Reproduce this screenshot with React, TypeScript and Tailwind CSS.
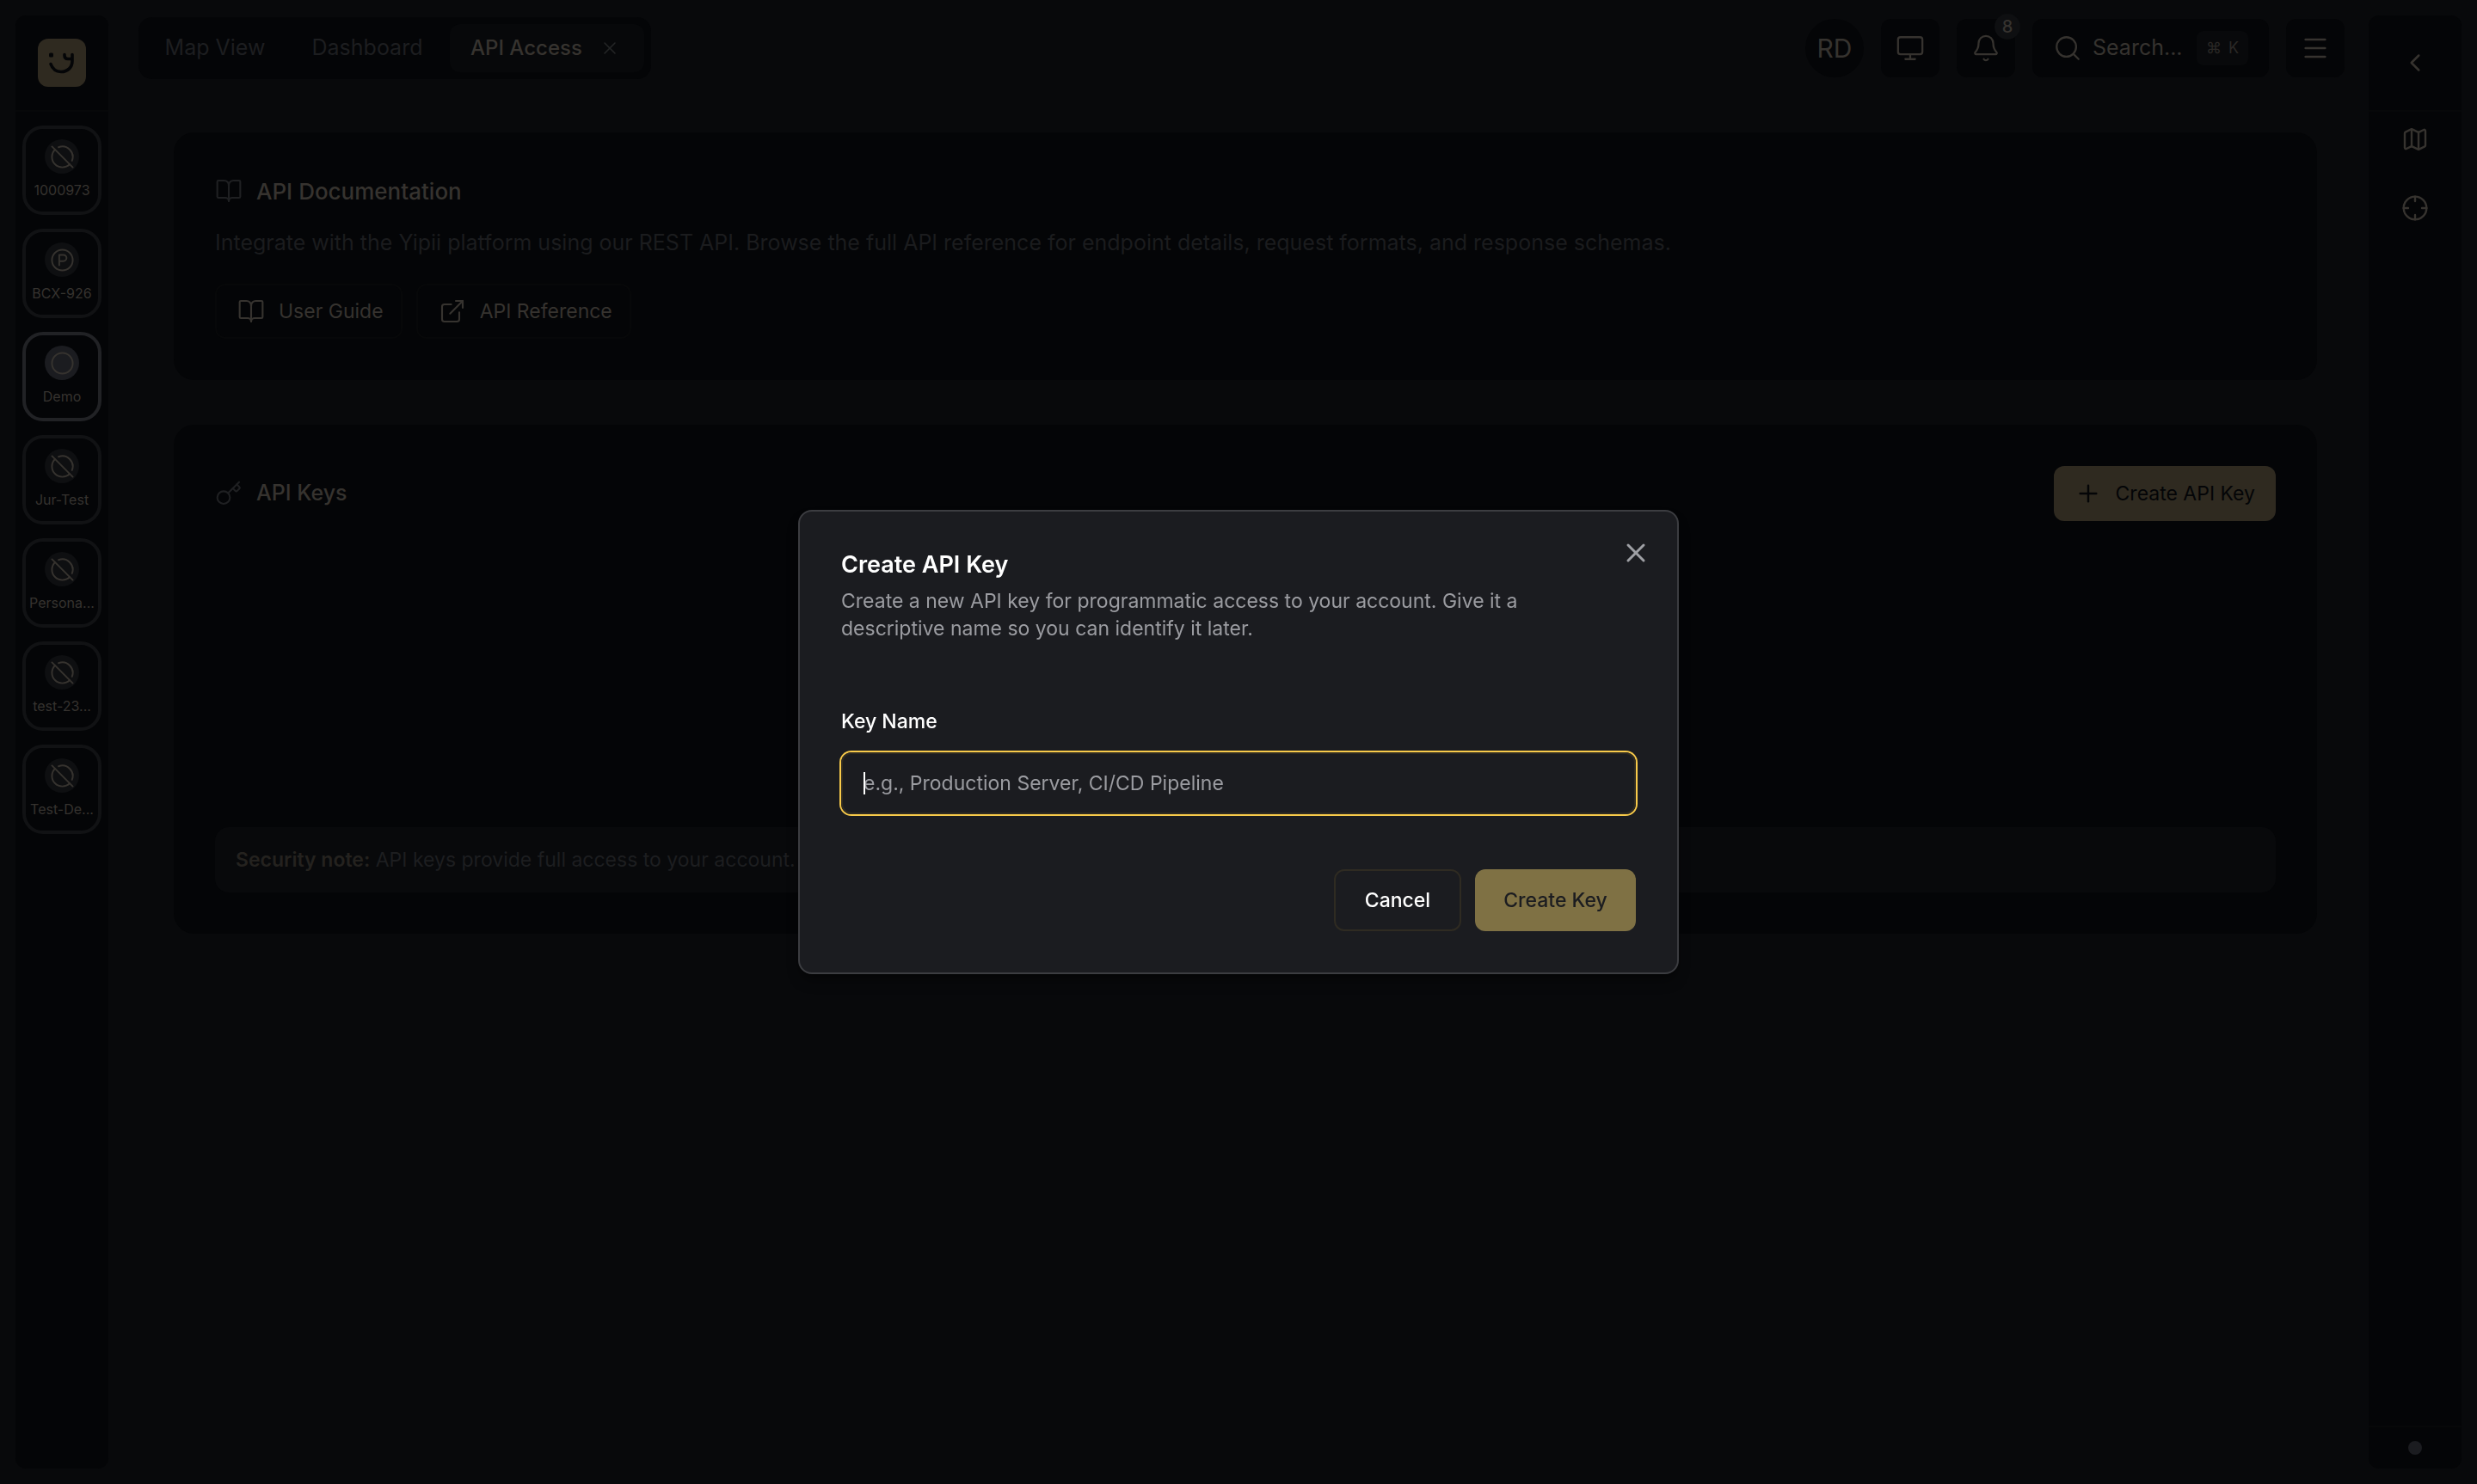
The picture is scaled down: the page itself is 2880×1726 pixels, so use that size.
import type { ReactNode } from "react";
import {
  Bell,
  BookOpen,
  ChevronLeft,
  Circle,
  CircleOff,
  CircleParking,
  Crosshair,
  ExternalLink,
  Key,
  Map as MapIcon,
  Menu,
  Monitor,
  Plus,
  Search,
  X,
} from "lucide-react";

type Tenant = { name: string; kind: "off" | "parked" | "active" };

const tenants: Tenant[] = [
  { name: "1000973", kind: "off" },
  { name: "BCX-926", kind: "parked" },
  { name: "Demo", kind: "active" },
  { name: "Jur-Test", kind: "off" },
  { name: "Persona...", kind: "off" },
  { name: "test-23...", kind: "off" },
  { name: "Test-De...", kind: "off" },
];

function Logo() {
  return (
    <svg viewBox="0 0 56 56" className="size-14" role="img" aria-label="Yipii">
      <rect width="56" height="56" rx="12" fill="#2f2a20" />
      <rect x="13" y="16.500" width="5" height="5" rx="1.5" fill="#040507" />
      <path d="M15 29.500C17 35 21 38.500 27 38.500C35 38.500 40 33 40 26V18.500" fill="none" stroke="#040507" strokeWidth="3.600" strokeLinecap="round" />
      <path d="M31 18.500V19.500C31 22 32.500 23.500 35 23.500H39" fill="none" stroke="#040507" strokeWidth="3.600" strokeLinecap="round" />
    </svg>
  );
}

function TenantTile({ name, kind }: Tenant) {
  const active = kind === "active";
  const Icon = active ? Circle : kind === "parked" ? CircleParking : CircleOff;
  return (
    <button
      type="button"
      aria-pressed={active}
      className={
        active
          ? "flex h-[104px] w-[92px] flex-col items-center rounded-3xl border-4 border-[#212225] pt-3"
          : "flex h-[104px] w-[92px] flex-col items-center rounded-3xl border-4 border-[#111214] pt-3"
      }
    >
      <span
        className={
          active
            ? "flex size-10 items-center justify-center rounded-full bg-[#1b1c20]"
            : "flex size-10 items-center justify-center rounded-full bg-[#0e0f11]"
        }
      >
        <Icon size={29} strokeWidth={1.6} />
      </span>
      <span className="mt-[7px] text-base leading-6">{name}</span>
    </button>
  );
}

function SquareButton({ label, children }: { label: string; children: ReactNode }) {
  return (
    <button type="button" aria-label={label} className="relative flex size-[68px] items-center justify-center rounded-xl bg-[#040507]">
      {children}
    </button>
  );
}

function TopBar() {
  return (
    <header className="mr-7 ml-[35px] flex items-center justify-between">
      <nav className="flex h-[72px] items-center gap-1.5 rounded-2xl bg-[#040507] p-2 text-[25px] text-[#1d1e20]">
        <a href="#map" className="min-w-[162px] text-center">Map View</a>
        <a href="#dashboard" className="min-w-[180px] text-center">Dashboard</a>
        <div className="flex h-14 items-center gap-5 rounded-xl bg-[#07080a] pr-7 pl-6">
          <a href="#api" aria-current="page" className="text-2xl font-medium text-[#36332f]">API Access</a>
          <button type="button" aria-label="Close tab">
            <X size={24} strokeWidth={1.6} className="text-[#242526]" />
          </button>
        </div>
      </nav>
      <div className="flex items-center gap-5">
        <button type="button" className="size-[68px] rounded-full bg-[#040507] text-3xl">RD</button>
        <SquareButton label="Displays">
          <Monitor size={34} strokeWidth={1.6} />
        </SquareButton>
        <SquareButton label="Notifications">
          <Bell size={34} strokeWidth={1.6} />
          <span className="absolute -top-1.5 -right-1.5 flex size-[30px] items-center justify-center rounded-full bg-[#0e0f11] text-xl font-medium">8</span>
        </SquareButton>
        <button type="button" className="flex h-[68px] min-w-[275px] items-center justify-between rounded-xl bg-[#040507] px-6 text-[25px]">
          <span className="flex items-center gap-3">
            <Search size={34} strokeWidth={1.6} />
            Search...
          </span>
          <kbd className="flex h-10 w-[60px] items-center justify-center gap-2 rounded-lg bg-[#08090b] font-[Inter,'DejaVu_Sans',sans-serif] text-lg text-[#2a2826]">
            <span>⌘</span>
            <span>K</span>
          </kbd>
        </button>
        <SquareButton label="Menu">
          <Menu size={34} strokeWidth={1.8} />
        </SquareButton>
      </div>
    </header>
  );
}

function OutlineLink({ icon, href, children }: { icon: ReactNode; href: string; children: ReactNode }) {
  return (
    <a href={href} className="flex h-16 items-center gap-4 rounded-xl border-2 border-[#070809] pr-5 pl-6 text-[23px]">
      {icon}
      {children}
    </a>
  );
}

function ApiPage() {
  return (
    <main className="mt-[62px] mr-[60px] ml-[76px] flex flex-col gap-[52px]">
      <section className="rounded-3xl bg-[#040507] p-12">
        <h2 className="flex h-10 items-center gap-4 text-[26px] font-medium">
          <BookOpen size={32} strokeWidth={1.6} className="text-[#1f2022]" />
          API Documentation
        </h2>
        <p className="mt-5 mb-7 text-[25px] leading-10 text-[#1b1c1e]">
          Integrate with the Yipii platform using our REST API. Browse the full API reference for endpoint details, request formats, and response schemas.
        </p>
        <div className="flex gap-4">
          <OutlineLink href="#guide" icon={<BookOpen size={32} strokeWidth={1.6} />}>User Guide</OutlineLink>
          <OutlineLink href="#reference" icon={<ExternalLink size={32} strokeWidth={1.6} />}>API Reference</OutlineLink>
        </div>
      </section>
      <section className="rounded-3xl bg-[#040507] p-12">
        <div className="flex items-center justify-between">
          <h2 className="flex items-center gap-4 text-[25px] font-medium">
            <Key size={32} strokeWidth={1.6} className="text-[#1f2022]" />
            API Keys
          </h2>
          <button type="button" className="flex h-16 items-center gap-4 rounded-xl bg-[#2f2a20] px-6 text-[23px] text-[#040507]">
            <Plus size={32} strokeWidth={1.8} />
            Create API Key
          </button>
        </div>
        <p className="mt-[356px] rounded-2xl bg-[#08090b] px-6 py-5 text-[23px] leading-9 text-[#1d1e20]">
          <strong className="font-semibold text-[#24221f]">Security note:</strong> API keys provide full access to your account.
        </p>
      </section>
    </main>
  );
}

function CreateKeyDialog() {
  return (
    <div className="fixed inset-0 flex items-center justify-center text-[23px]">
      <form
        role="dialog"
        aria-modal="true"
        aria-labelledby="dialog-title"
        onSubmit={(event) => event.preventDefault()}
        className="relative w-full max-w-[1024px] rounded-2xl border-2 border-[#3c3d41] bg-[#1b1c20] p-12 text-white shadow-lg shadow-black/40"
      >
        <button type="button" aria-label="Close" className="absolute top-[30px] right-[30px] text-[#9fa0a5]">
          <X size={36} strokeWidth={2} />
        </button>
        <h2 id="dialog-title" className="text-[27px] leading-7 font-semibold">Create API Key</h2>
        <p className="mt-3 pr-24 leading-8 text-[#9b9ca1]">
          Create a new API key for programmatic access to your account. Give it a descriptive name so you can identify it later.
        </p>
        <label htmlFor="key-name" className="mt-20 block leading-6 font-medium">Key Name</label>
        <div className="relative mt-6">
          <input
            id="key-name"
            type="text"
            placeholder="e.g., Production Server, CI/CD Pipeline"
            className="block h-[72px] w-full rounded-xl border-2 border-[#2f2b22] bg-transparent px-6 caret-transparent ring-2 ring-[#f8ca4a] outline-none placeholder:text-[#9b9ca1]"
          />
          <span className="absolute top-[23px] left-[26px] h-[26px] w-0.5 bg-white" />
        </div>
        <div className="mt-16 flex justify-end gap-4">
          <button type="button" className="h-[72px] min-w-[148px] rounded-xl border-2 border-[#2f2b22] px-8 font-medium">Cancel</button>
          <button type="submit" className="h-[72px] min-w-[187px] rounded-xl bg-[#7f7144] px-8 font-medium text-[#1b1c20]">Create Key</button>
        </div>
      </form>
    </div>
  );
}

export default function App() {
  return (
    <div className="flex min-h-screen bg-[#08090b] p-[18px] font-[Inter,sans-serif] text-[#36332f]">
      <aside className="flex w-[108px] shrink-0 flex-col items-center rounded-xl bg-[#040507]">
        <div className="flex h-28 w-full items-center justify-center border-b-2 border-[#070809]">
          <Logo />
        </div>
        <div className="mt-4 flex flex-col gap-4">
          {tenants.map((tenant) => (
            <TenantTile key={tenant.name} {...tenant} />
          ))}
        </div>
      </aside>
      <div className="mt-0.5 min-w-0 flex-1">
        <TopBar />
        <ApiPage />
      </div>
      <aside className="flex w-[108px] shrink-0 flex-col rounded-xl bg-[#040507]">
        <button type="button" aria-label="Expand panel" className="flex h-28 items-center justify-center border-b-2 border-[#070809]">
          <ChevronLeft size={34} strokeWidth={1.8} />
        </button>
        <div className="mt-4 flex flex-1 flex-col items-center gap-12">
          <button type="button" aria-label="Map">
            <MapIcon size={32} strokeWidth={1.8} />
          </button>
          <button type="button" aria-label="Locate">
            <Crosshair size={32} strokeWidth={1.8} />
          </button>
        </div>
        <div className="flex h-[50px] items-center justify-center border-t-2 border-[#070809]">
          <span className="size-4 rounded-full bg-[#1b1c20]" />
        </div>
      </aside>
      <CreateKeyDialog />
    </div>
  );
}
